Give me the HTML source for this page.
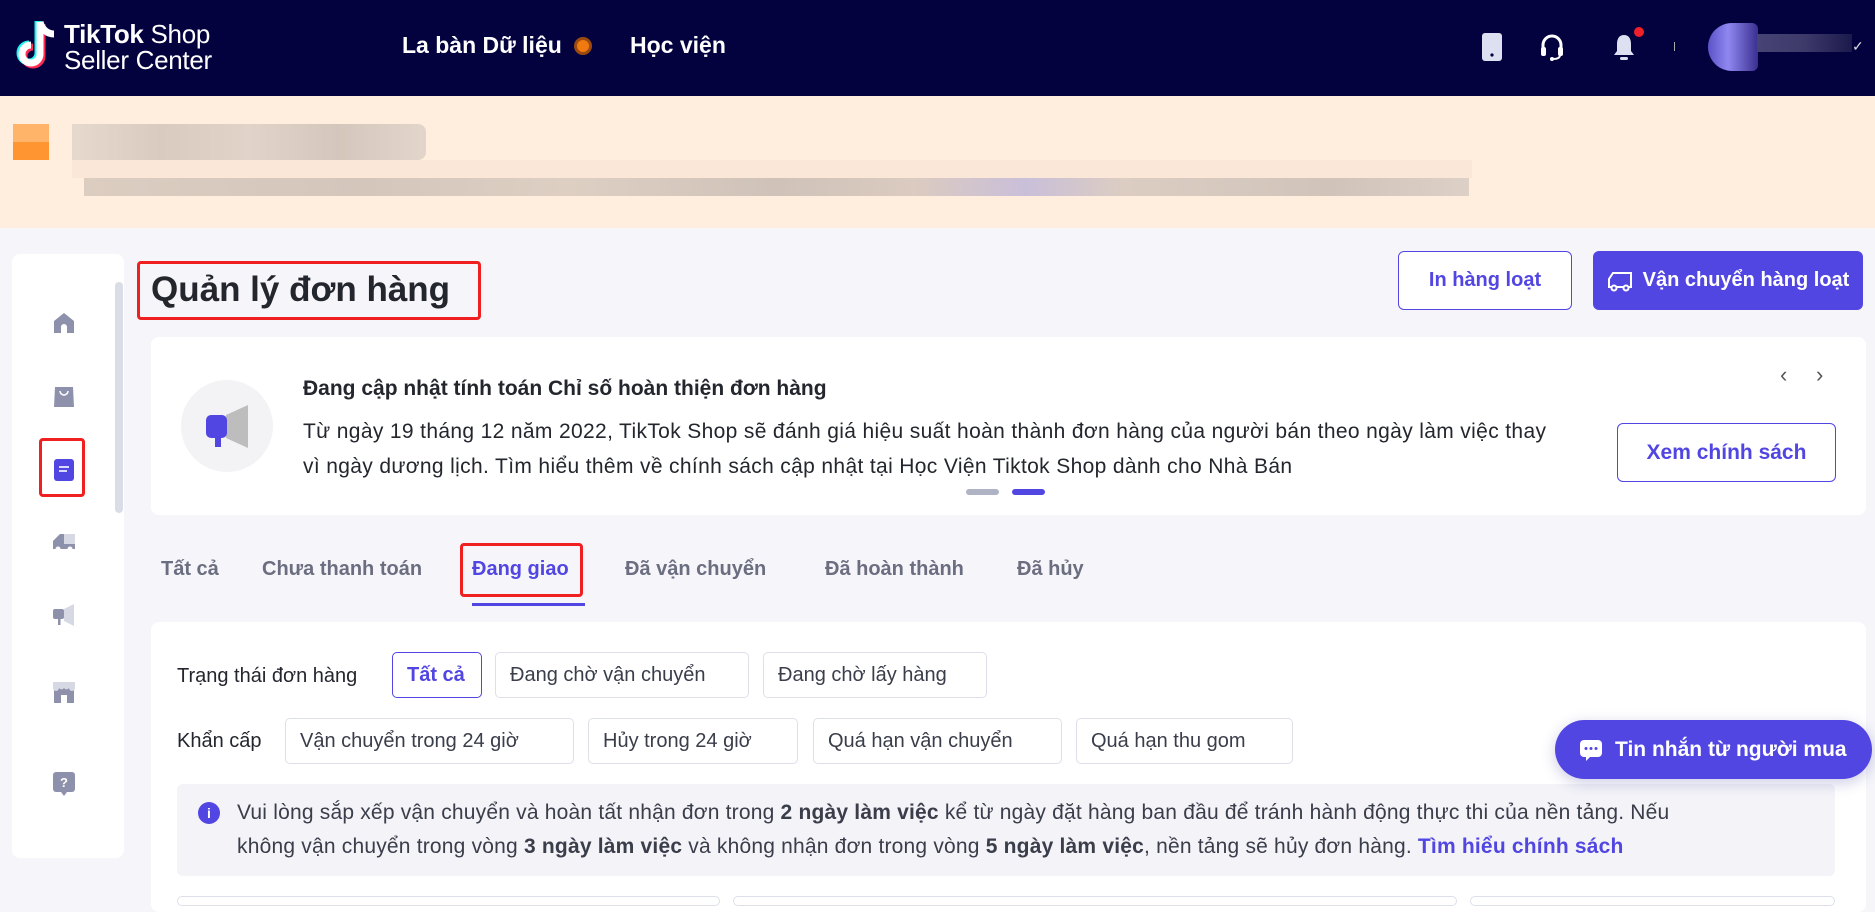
<!DOCTYPE html>
<html><head><meta charset="utf-8">
<style>
*{box-sizing:border-box;margin:0;padding:0}
body{width:1875px;height:899px;overflow:hidden;background:#f5f5fa;font-family:"Liberation Sans",sans-serif;position:relative;color:#24262e}
.a{position:absolute}
.hdr{left:0;top:0;width:1875px;height:96px;background:#03023f}
.nav{color:#fff;font-size:23px;font-weight:bold;top:32px}
.banner{left:0;top:96px;width:1875px;height:132px;background:#ffeedd}
.card{background:#fff;border-radius:8px}
.btn{border-radius:6px;font-size:20px;display:flex;align-items:center;justify-content:center;font-weight:bold}
.tab{top:558px;font-size:20px;font-weight:bold;color:#6b6e80}
.chip{border:1px solid #dde0ea;border-radius:5px;font-size:20px;color:#3a3d4a;display:flex;align-items:center;padding-left:14px;height:46px}
.lbl{font-size:20px;color:#24262e}
.ico{position:absolute;left:52px}
</style></head><body>
<div class="a hdr"></div>
<svg class="a" style="left:12px;top:18px" width="52" height="56" viewBox="0 0 52 56">
<path d="M28 4v32a9 9 0 1 1-9-9" fill="none" stroke="#25f4ee" stroke-width="7" transform="translate(-2,-1)"/>
<path d="M28 4v32a9 9 0 1 1-9-9" fill="none" stroke="#fe2c55" stroke-width="7" transform="translate(2,2)"/>
<path d="M28 4v32a9 9 0 1 1-9-9" fill="none" stroke="#fff" stroke-width="7"/>
<path d="M28 4c2 8 8 12 14 12" fill="none" stroke="#fff" stroke-width="7"/>
</svg>
<div class="a" style="left:64px;top:21px;color:#fff;font-size:26px;line-height:26px;letter-spacing:-0.3px"><b>TikTok</b> Shop<br>Seller Center</div>
<div class="a nav" style="left:402px">La bàn Dữ liệu</div>
<div class="a" style="left:574px;top:37px;width:18px;height:18px;border-radius:50%;background:#f07a10;border:3px solid #9a4a10"></div>
<div class="a nav" style="left:630px">Học viện</div>
<svg class="a" style="left:1482px;top:33px" width="20" height="28"><rect x="0" y="0" width="20" height="28" rx="3" fill="#dde0f0"/><circle cx="10" cy="22" r="1.6" fill="#03023f"/></svg>
<svg class="a" style="left:1540px;top:33px" width="24" height="28" viewBox="0 0 24 28"><path d="M3 15V12a9 9 0 0 1 18 0v3" fill="none" stroke="#fff" stroke-width="3"/><rect x="1" y="14" width="5" height="9" rx="2" fill="#fff"/><rect x="18" y="14" width="5" height="9" rx="2" fill="#fff"/><path d="M20 22c0 3-3 4-7 4" stroke="#fff" stroke-width="2" fill="none"/><circle cx="12" cy="26" r="2" fill="#fff"/></svg>
<svg class="a" style="left:1612px;top:33px" width="24" height="28" viewBox="0 0 24 28"><path d="M12 2c-5 0-7 4-7 9v7l-3 4h20l-3-4v-7c0-5-2-9-7-9z" fill="#dde0f0"/><rect x="8" y="24" width="8" height="3" rx="1.5" fill="#dde0f0"/></svg>
<div class="a" style="left:1634px;top:27px;width:10px;height:10px;border-radius:50%;background:#f0202a"></div>
<div class="a" style="left:1674px;top:42px;width:1px;height:9px;background:#aaa"></div>
<div class="a" style="left:1708px;top:23px;width:50px;height:48px;border-radius:24px 6px 6px 24px;background:linear-gradient(90deg,#5a52c8,#8f88f0 40%,#3a2f90)"></div>
<div class="a" style="left:1757px;top:34px;width:95px;height:18px;background:linear-gradient(90deg,#464474,#3d3a6a,#1c1a4c)"></div>
<div class="a" style="left:1852px;top:38px;color:#ddd;font-size:14px">✓</div>
<div class="a banner"></div>
<div class="a" style="left:13px;top:124px;width:36px;height:18px;background:#ffb46a"></div>
<div class="a" style="left:13px;top:142px;width:36px;height:18px;background:#ff9530"></div>
<div class="a" style="left:72px;top:124px;width:354px;height:36px;background:linear-gradient(90deg,#e3d6cb,#d5c7bd,#ded0c6,#cfc2b8,#dfd2c8);border-radius:0 8px 8px 0;opacity:.9"></div>
<div class="a" style="left:72px;top:160px;width:1400px;height:18px;background:#fbe7d8"></div>
<div class="a" style="left:84px;top:178px;width:1385px;height:18px;background:linear-gradient(90deg,#dccdc1,#d4c6bb 20%,#decfc3 35%,#cfc2b8 50%,#dbcbc0 60%,#c9bfd9 68%,#dccdc2 75%,#d0c4ba 90%,#ddd0c6)"></div>
<div class="a card" style="left:12px;top:254px;width:112px;height:604px"></div>
<div class="a" style="left:115px;top:282px;width:8px;height:231px;border-radius:4px;background:#dadce6"></div>
<svg class="ico" style="top:311px" width="24" height="24" viewBox="0 0 24 24"><path d="M2 10L12 2l10 8v12H15v-6a3 3 0 0 0-6 0v6H2z" fill="#8e91ab"/></svg>
<svg class="ico" style="top:385px" width="24" height="24" viewBox="0 0 24 24"><path d="M3 2h18l1 20H2z" fill="#8e91ab"/><path d="M8 6a4 4 0 0 0 8 0" stroke="#fff" stroke-width="1.5" fill="none"/></svg>
<div class="a" style="left:39px;top:438px;width:46px;height:59px;border:3px solid #f02020;border-radius:4px"></div>
<svg class="ico" style="top:458px" width="24" height="24" viewBox="0 0 24 24"><rect x="2" y="1" width="20" height="22" rx="3" fill="#5246e3"/><rect x="7" y="8" width="10" height="2" fill="#dcd8ff"/><rect x="7" y="12" width="8" height="2" fill="#dcd8ff"/></svg>
<svg class="ico" style="top:530px" width="24" height="24" viewBox="0 0 24 24"><path d="M8 4h15v15H1v-8z" fill="#d6d8e4"/><path d="M8 4h4v15H1v-8z" fill="#8e91ab"/><rect x="1" y="14" width="22" height="5" fill="#8e91ab"/><circle cx="6" cy="19" r="2.5" fill="#fff"/><circle cx="18" cy="19" r="2.5" fill="#fff"/></svg>
<svg class="ico" style="top:603px" width="24" height="24" viewBox="0 0 24 24"><path d="M12 6l10-5v22l-10-5z" fill="#d6d8e4"/><rect x="1" y="6" width="11" height="10" rx="2" fill="#8e91ab"/><rect x="6" y="15" width="2.5" height="7" fill="#8e91ab"/></svg>
<svg class="ico" style="top:680px" width="24" height="24" viewBox="0 0 24 24"><rect x="2" y="6" width="20" height="17" fill="#8e91ab"/><path d="M1 2h22v6a3 3 0 0 1-6 0 3 3 0 0 1-5 0 3 3 0 0 1-5 0 3 3 0 0 1-6 0z" fill="#d6d8e4"/><rect x="9" y="15" width="6" height="8" fill="#fff"/></svg>
<svg class="ico" style="top:771px" width="24" height="26" viewBox="0 0 24 26"><rect x="1" y="1" width="22" height="20" rx="3" fill="#8e91ab"/><path d="M9 21l3 4 3-4z" fill="#8e91ab"/><text x="12" y="16" font-size="13" font-weight="bold" fill="#fff" text-anchor="middle" font-family="Liberation Sans">?</text></svg>
<div class="a" style="left:137px;top:261px;width:344px;height:59px;border:3px solid #f02020;border-radius:4px"></div>
<div class="a" style="left:151px;top:270px;font-size:35px;font-weight:bold;color:#24262e">Quản lý đơn hàng</div>
<div class="a btn" style="left:1398px;top:251px;width:174px;height:59px;border:1.5px solid #5246e3;color:#5246e3;background:#fff">In hàng loạt</div>
<div class="a btn" style="left:1593px;top:251px;width:270px;height:59px;background:#5246e3;color:#fff">
<svg width="26" height="22" viewBox="0 0 26 22" style="margin-right:10px"><path d="M8 3h16v14H2v-8l4-6z" fill="none" stroke="#fff" stroke-width="2"/><circle cx="7" cy="18" r="2.5" fill="#5246e3" stroke="#fff" stroke-width="2"/><circle cx="19" cy="18" r="2.5" fill="#5246e3" stroke="#fff" stroke-width="2"/></svg>Vận chuyển hàng loạt</div>
<div class="a card" style="left:151px;top:337px;width:1715px;height:178px"></div>
<div class="a" style="left:181px;top:380px;width:92px;height:92px;border-radius:50%;background:#f3f3f5"></div>
<svg class="a" style="left:203px;top:402px" width="46" height="46" viewBox="0 0 46 46"><path d="M25 13l22-10v43L25 36z" fill="#bdbdbd" transform="translate(-2,0)"/><rect x="3" y="13" width="21" height="23" rx="5" fill="#5246e3"/><rect x="12" y="34" width="6" height="11" fill="#5246e3"/></svg>
<div class="a" style="left:303px;top:377px;font-size:21px;font-weight:bold;color:#24262e">Đang cập nhật tính toán Chỉ số hoàn thiện đơn hàng</div>
<div class="a" style="left:303px;top:414px;font-size:21px;letter-spacing:0.35px;line-height:35px;color:#24262e;width:1255px">Từ ngày 19 tháng 12 năm 2022, TikTok Shop sẽ đánh giá hiệu suất hoàn thành đơn hàng của người bán theo ngày làm việc thay vì ngày dương lịch. Tìm hiểu thêm về chính sách cập nhật tại Học Viện Tiktok Shop dành cho Nhà Bán</div>
<div class="a btn" style="left:1617px;top:423px;width:219px;height:59px;border:1.5px solid #5246e3;color:#5246e3;font-size:21px">Xem chính sách</div>
<div class="a" style="left:1780px;top:362px;font-size:22px;color:#555">‹</div>
<div class="a" style="left:1816px;top:362px;font-size:22px;color:#555">›</div>
<div class="a" style="left:966px;top:489px;width:33px;height:6px;border-radius:3px;background:#b0b3c4"></div>
<div class="a" style="left:1012px;top:489px;width:33px;height:6px;border-radius:3px;background:#5246e3"></div>
<div class="a tab" style="left:161px">Tất cả</div>
<div class="a tab" style="left:262px">Chưa thanh toán</div>
<div class="a tab" style="left:472px;color:#5246e3">Đang giao</div>
<div class="a tab" style="left:625px">Đã vận chuyển</div>
<div class="a tab" style="left:825px">Đã hoàn thành</div>
<div class="a tab" style="left:1017px">Đã hủy</div>
<div class="a" style="left:460px;top:543px;width:123px;height:54px;border:3px solid #f02020;border-radius:4px"></div>
<div class="a" style="left:472px;top:603px;width:113px;height:3px;background:#5246e3"></div>
<div class="a card" style="left:151px;top:622px;width:1715px;height:290px"></div>
<div class="a lbl" style="left:177px;top:665px">Trạng thái đơn hàng</div>
<div class="a chip" style="left:392px;top:652px;width:90px;border-color:#5246e3;color:#5246e3;font-weight:bold">Tất cả</div>
<div class="a chip" style="left:495px;top:652px;width:254px">Đang chờ vận chuyển</div>
<div class="a chip" style="left:763px;top:652px;width:224px">Đang chờ lấy hàng</div>
<div class="a lbl" style="left:177px;top:730px">Khẩn cấp</div>
<div class="a chip" style="left:285px;top:718px;width:289px">Vận chuyển trong 24 giờ</div>
<div class="a chip" style="left:588px;top:718px;width:210px">Hủy trong 24 giờ</div>
<div class="a chip" style="left:813px;top:718px;width:249px">Quá hạn vận chuyển</div>
<div class="a chip" style="left:1076px;top:718px;width:217px">Quá hạn thu gom</div>
<div class="a" style="left:177px;top:784px;width:1658px;height:92px;border-radius:6px;background:#f3f3f8"></div>
<div class="a" style="left:198px;top:802px;width:22px;height:22px;border-radius:50%;background:#5246e3;color:#fff;font-size:14px;font-weight:bold;text-align:center;line-height:22px">i</div>
<div class="a" style="left:237px;top:796px;font-size:21px;letter-spacing:0.2px;line-height:34px;color:#3a3d4a;width:1470px">Vui lòng sắp xếp vận chuyển và hoàn tất nhận đơn trong <b>2 ngày làm việc</b> kể từ ngày đặt hàng ban đầu để tránh hành động thực thi của nền tảng. Nếu không vận chuyển trong vòng <b>3 ngày làm việc</b> và không nhận đơn trong vòng <b>5 ngày làm việc</b>, nền tảng sẽ hủy đơn hàng. <span style="color:#5246e3;font-weight:bold">Tìm hiểu chính sách</span></div>
<div class="a" style="left:177px;top:896px;width:543px;height:10px;border:1px solid #dde0ea;border-radius:5px"></div>
<div class="a" style="left:733px;top:896px;width:724px;height:10px;border:1px solid #dde0ea;border-radius:5px"></div>
<div class="a" style="left:1470px;top:896px;width:365px;height:10px;border:1px solid #dde0ea;border-radius:5px"></div>
<div class="a" style="left:1555px;top:720px;width:317px;height:59px;border-radius:30px;background:#5246e3;color:#fff;font-size:21px;font-weight:bold;display:flex;align-items:center;padding-left:24px;box-shadow:0 4px 14px rgba(60,50,150,.25)">
<svg width="24" height="24" viewBox="0 0 24 24" style="margin-right:12px"><rect x="1" y="2" width="22" height="17" rx="4" fill="#fff"/><path d="M7 18v5l5-5z" fill="#fff"/><circle cx="7" cy="10.5" r="1.5" fill="#5246e3"/><circle cx="12" cy="10.5" r="1.5" fill="#5246e3"/><circle cx="17" cy="10.5" r="1.5" fill="#5246e3"/></svg>Tin nhắn từ người mua</div>
</body></html>
